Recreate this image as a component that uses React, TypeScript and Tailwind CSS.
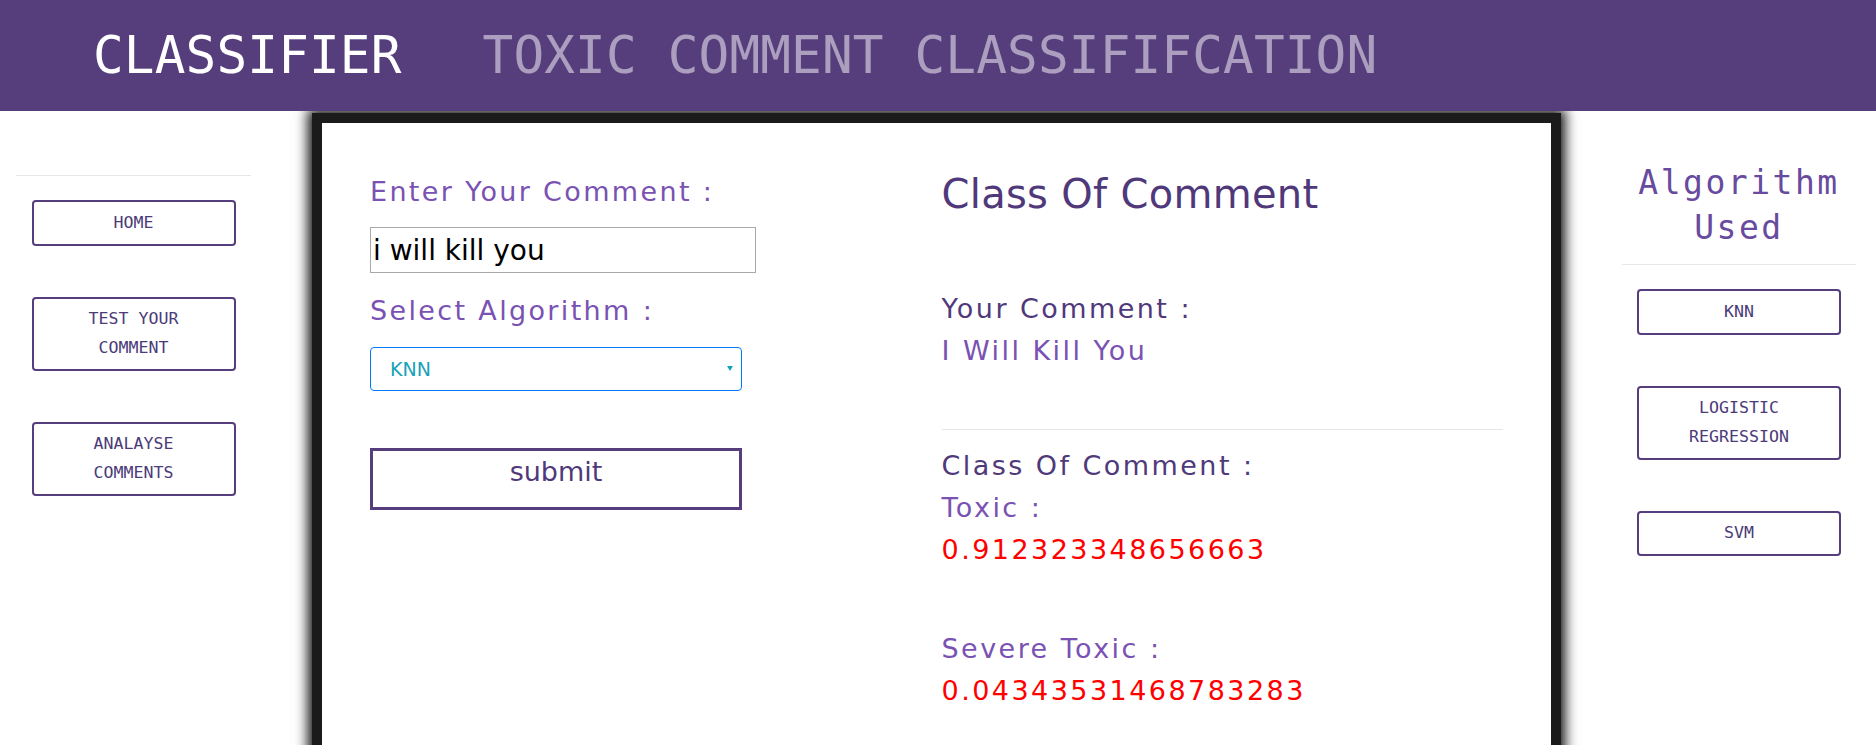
import { useState } from 'react';

const mono = "font-['DejaVu_Sans_Mono','Liberation_Mono',monospace]";
const sans = "font-['DejaVu_Sans','Liberation_Sans',sans-serif]";

const navLinks = ['HOME', 'TEST YOUR COMMENT', 'ANALAYSE COMMENTS'];
const algorithms = ['KNN', 'LOGISTIC REGRESSION', 'SVM'];

function SideButton({ label }: { label: string }) {
  return (
    <button
      className={`${mono} w-[204px] rounded-[4px] border-2 border-[#563d7c] bg-white px-6 py-[6.5px] text-center text-[16.6px] leading-[28.5px] text-[#4b3b78]`}
    >
      {label}
    </button>
  );
}

export default function App() {
  const [comment, setComment] = useState('i will kill you');
  const [algo, setAlgo] = useState('KNN');

  return (
    <div className="h-[745px] overflow-hidden bg-white">
      <header className="relative z-10 flex h-[111px] items-center bg-[#563d7c] pl-[93px]">
        <span className={`${mono} text-[51px] leading-[59px] tracking-[0.15px] text-white`}>CLASSIFIER</span>
        <span className={`${mono} ml-[81px] text-[51px] leading-[59px] tracking-[0.15px] text-white/50`}>
          TOXIC COMMENT CLASSIFIFCATION
        </span>
      </header>

      <div className="flex pr-1">
        {/* left nav */}
        <aside className="w-[267px] shrink-0 px-4 pt-[64px]">
          <hr className="border-t border-[#e6e6e6]" />
          <div className="mt-[24px] flex flex-col items-center gap-[51px]">
            {navLinks.map((l) => (
              <SideButton key={l} label={l} />
            ))}
          </div>
        </aside>

        {/* main card */}
        <main className="min-w-0 flex-1 px-[45px]">
          <div className="mt-[2px] min-h-[700px] border-[10px] border-[#1b1b1b] bg-white px-[48px] pt-[48px] shadow-[0_0_12px_4px_rgba(0,0,0,0.95)]">
            <div className="grid grid-cols-2 gap-[10px]">
              <div className={sans}>
                <label className="block text-[27px] leading-[42px] tracking-[2.35px] text-[#7952b3]">
                  Enter Your Comment :
                </label>
                <input
                  value={comment}
                  onChange={(e) => setComment(e.target.value)}
                  className={`${sans} mt-[14px] block h-[46px] w-[386px] border border-[#a9a9a9] pl-[2px] text-[28px] text-black outline-none`}
                />
                <label className="mt-[17px] block text-[27px] leading-[42px] tracking-[2.35px] text-[#7952b3]">
                  Select Algorithm :
                </label>
                <div className="relative mt-[15px] w-[372px]">
                  <select
                    value={algo}
                    onChange={(e) => setAlgo(e.target.value)}
                    className={`${sans} block h-[44px] w-full appearance-none rounded-[4px] border border-[#007bff] bg-white pl-[19px] text-[19px] text-[#17a2b8] outline-none`}
                  >
                    <option>KNN</option>
                    <option>LOGISTIC REGRESSION</option>
                    <option>SVM</option>
                  </select>
                  <span className="pointer-events-none absolute right-[9px] top-[19px] h-0 w-0 border-x-[3px] border-t-[5px] border-x-transparent border-t-[#17a2b8]" />
                </div>
                <button className="mt-[57px] flex h-[62px] w-[372px] items-start justify-center border-[3px] border-[#563d7c] bg-white text-[27px] leading-[42px] text-[#50397a]">
                  submit
                </button>
              </div>

              <div className={`${sans} text-[27px] leading-[42px] tracking-[2.45px]`}>
                <h2 className="text-[40px] leading-[46px] tracking-[0.3px] text-[#50397a]">
                  Class Of Comment
                </h2>
                <p className="mt-[71px] text-[#50397a]">Your Comment :</p>
                <p className="text-[#7952b3]">I Will Kill You</p>
                <hr className="mt-[57px] border-t border-[#e6e6e6]" />
                <p className="mt-[15px] text-[#50397a]">Class Of Comment :</p>
                <p className="text-[#7952b3]">Toxic :</p>
                <p className="text-[#ff0000]">0.912323348656663</p>
                <p className="mt-[57px] text-[#7952b3]">Severe Toxic :</p>
                <p className="text-[#ff0000]">0.04343531468783283</p>
              </div>
            </div>
          </div>
        </main>

        {/* right nav */}
        <aside className="w-[266px] shrink-0 px-4 pt-[49px]">
          <h3 className={`${mono} text-center text-[33px] leading-[45px] tracking-[2.5px] text-[#684a9e]`}>
            Algorithm Used
          </h3>
          <hr className="mt-[14px] border-t border-[#e6e6e6]" />
          <div className="mt-[24px] flex flex-col items-center gap-[51px]">
            {algorithms.map((a) => (
              <SideButton key={a} label={a} />
            ))}
          </div>
        </aside>
      </div>
    </div>
  );
}
